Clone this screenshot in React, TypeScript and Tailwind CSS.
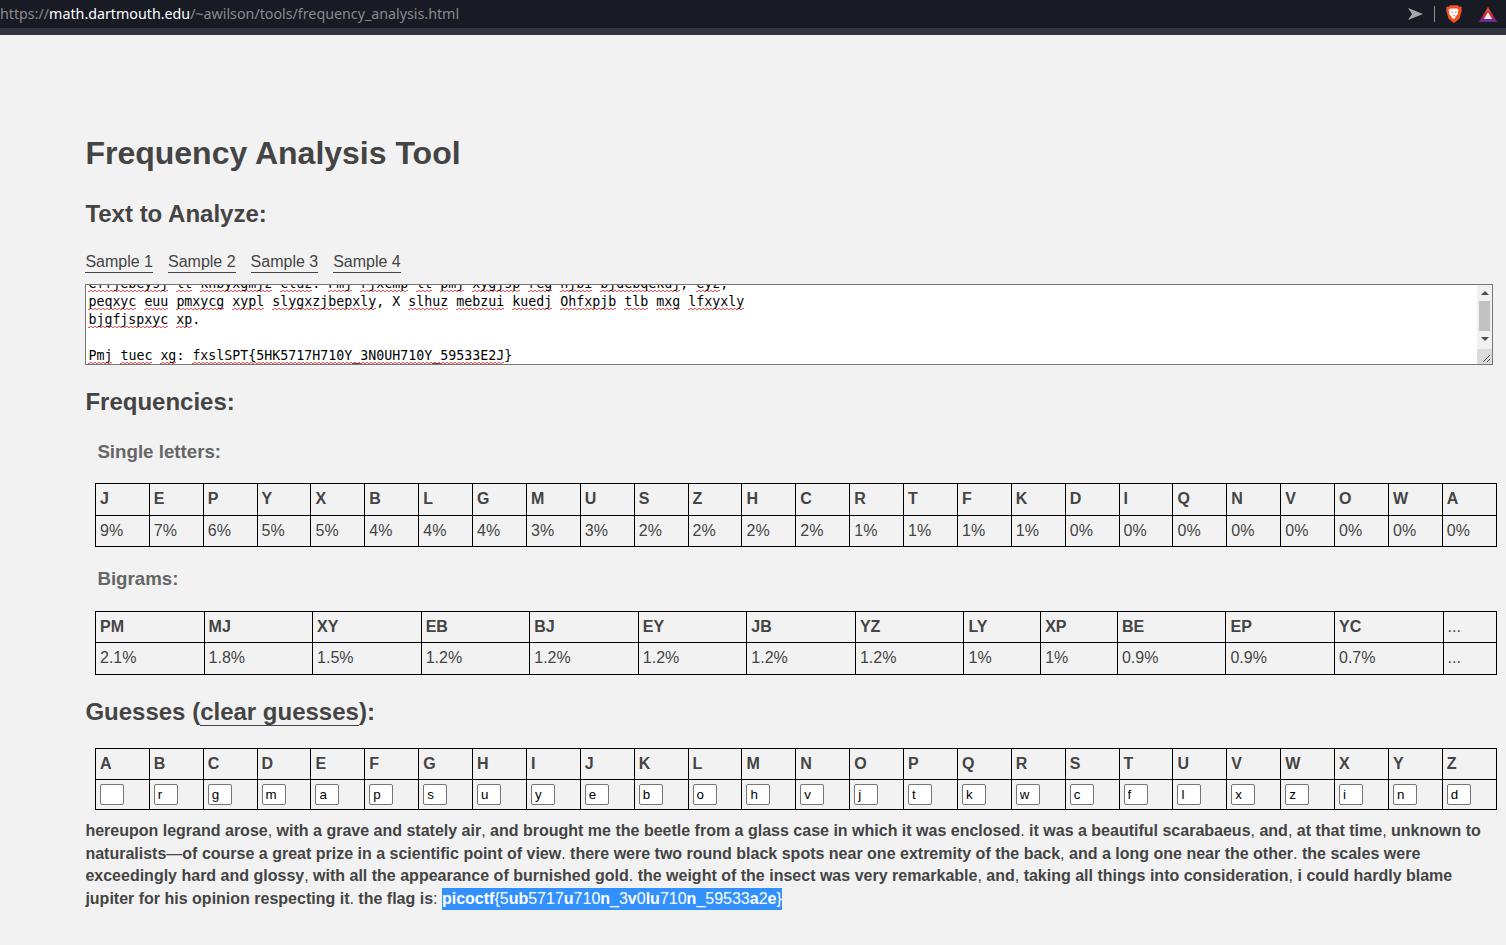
const SANS = "font-['Liberation_Sans',Arial,sans-serif]"

const singles: [string, string][] = [
  ['J', '9%'], ['E', '7%'], ['P', '6%'], ['Y', '5%'], ['X', '5%'], ['B', '4%'], ['L', '4%'], ['G', '4%'], ['M', '3%'],
  ['U', '3%'], ['S', '2%'], ['Z', '2%'], ['H', '2%'], ['C', '2%'], ['R', '1%'], ['T', '1%'], ['F', '1%'], ['K', '1%'],
  ['D', '0%'], ['I', '0%'], ['Q', '0%'], ['N', '0%'], ['V', '0%'], ['O', '0%'], ['W', '0%'], ['A', '0%'],
]

const bigrams: [string, string][] = [
  ['PM', '2.1%'], ['MJ', '1.8%'], ['XY', '1.5%'], ['EB', '1.2%'], ['BJ', '1.2%'], ['EY', '1.2%'], ['JB', '1.2%'],
  ['YZ', '1.2%'], ['LY', '1%'], ['XP', '1%'], ['BE', '0.9%'], ['EP', '0.9%'], ['YC', '0.7%'], ['...', '...'],
]

const guesses: [string, string][] = [
  ['A', ''], ['B', 'r'], ['C', 'g'], ['D', 'm'], ['E', 'a'], ['F', 'p'], ['G', 's'], ['H', 'u'], ['I', 'y'], ['J', 'e'],
  ['K', 'b'], ['L', 'o'], ['M', 'h'], ['N', 'v'], ['O', 'j'], ['P', 't'], ['Q', 'k'], ['R', 'w'], ['S', 'c'], ['T', 'f'],
  ['U', 'l'], ['V', 'x'], ['W', 'z'], ['X', 'i'], ['Y', 'n'], ['Z', 'd'],
]

const thClass = 'border border-black px-1 py-1 text-left font-bold'
const tdClass = 'border border-black px-1 py-1 text-left font-normal'

const FreqTable = ({ rows }: { rows: [string, string][] }) => (
  <table className="ml-[9.6px] w-[1402px] border-collapse">
    <tbody>
      <tr>
        {rows.map(([k], i) => (
          <th key={i} className={k === '...' ? tdClass : thClass}>{k}</th>
        ))}
      </tr>
      <tr>
        {rows.map(([k, v], i) => (
          <td key={k + i} className={tdClass}>{v}</td>
        ))}
      </tr>
    </tbody>
  </table>
)

// letters that have a guess are bold, digits and punctuation are not
const Decoded = ({ text }: { text: string }) => (
  <>
    {text.split(/([a-z]+)/).map((part, i) =>
      /^[a-z]+$/.test(part) ? <b key={i} className="font-bold">{part}</b> : <span key={i}>{part}</span>
    )}
  </>
)

// spell-check squiggle: two offset rows of 2px dashes
const Wavy = ({ children }: { children: string }) => (
  <span className="bg-no-repeat pb-px bg-[image:repeating-linear-gradient(90deg,#f05050_0_2px,transparent_2px_4px),repeating-linear-gradient(90deg,transparent_0_2px,#f05050_2px_4px)] bg-[size:100%_1px,100%_1px] bg-[position:0_100%,0_calc(100%-1px)]">
    {children}
  </span>
)

const WavyLine = ({ text }: { text: string }) => (
  <div className="h-[18px] whitespace-pre">
    {text.split(/( |, |\. |: |\.$|,$|\})/).map((part, i) =>
      /^[A-Za-z0-9_{]{2,}/.test(part) ? <Wavy key={i}>{part}</Wavy> : <span key={i}>{part}</span>
    )}
  </div>
)

const BraveIcon = () => (
  <svg width="16" height="18" viewBox="0 0 16 18">
    <path d="M4 0.3h8l1.3 1.5 1.6-.3 1 1.2-.5 1.3.4 1.4-2 7.2c-.3 1-.8 1.5-1.6 2.1L8.8 17.4c-.5.3-1.1.3-1.6 0l-3.4-2.7c-.8-.6-1.3-1.1-1.6-2.1L.2 5.4l.4-1.4L.1 2.7l1-1.2 1.6.3z" fill="#f4511e" />
    <path d="M5 3.4h6l1.6 1.5-1 2 .5 1.6-1.9 2.4-1.2.8.6 1.1L8 14l-2.6-1.2.6-1.1-1.2-.8-1.9-2.4.5-1.6-1-2z" fill="#fff" />
    <path d="M5.2 6.5l1.8.6-.7 1.2zM10.8 6.5L9 7.1l.7 1.2zM7 10.3h2L8 11.4z" fill="#f4511e" />
  </svg>
)

const RewardsIcon = () => (
  <svg width="18" height="15" viewBox="0 0 18 15">
    <defs>
      <linearGradient id="rw" x1="0" y1="0" x2="0" y2="1">
        <stop offset="0" stopColor="#ff5a1f" />
        <stop offset="0.7" stopColor="#c2185b" />
        <stop offset="1" stopColor="#9c1c6e" />
      </linearGradient>
    </defs>
    <polygon points="9,0 18,15 0,15" fill="url(#rw)" />
    <polygon points="2.6,12 15.4,12 18,15 0,15" fill="#6a2c91" />
    <polygon points="9,5.4 13,12 5,12" fill="#fff" />
  </svg>
)

export default function App() {
  return (
    <div className={`min-h-[945px] bg-[#f2f2f2] text-[16px] leading-[1.4] text-[#444] ${SANS}`}>
      {/* browser address bar */}
      <div className="flex h-[28px] items-center justify-between bg-[#181a24] pr-[9px] font-['Noto_Sans',sans-serif] text-[14.25px] text-[#8a8a8a]">
        <div>
          https://<span className="text-white">math.dartmouth.edu</span>/~awilson/tools/frequency_analysis.html
        </div>
        <div className="flex items-center">
          <svg width="15" height="12" viewBox="0 0 15 12">
            <polygon points="0,0 15,6 0,12 4,6" fill="#a8a8a8" />
          </svg>
          <div className="ml-[11px] h-[16px] w-px bg-[#8c8c8c]" />
          <div className="ml-[11px] flex"><BraveIcon /></div>
          <div className="ml-[17px] flex"><RewardsIcon /></div>
        </div>
      </div>
      <div className="h-[7px] bg-[#32343f]" />

      <main className="pl-[85.4px] pr-[12.6px] pt-[96px]">
        <h1 className="text-[32px] font-bold">Frequency Analysis Tool</h1>
        <h2 className="mt-[21px] text-[24px] font-bold">Text to Analyze:</h2>

        <div className="mt-[23px] flex gap-[15px]">
          {['Sample 1', 'Sample 2', 'Sample 3', 'Sample 4'].map((s) => (
            <a key={s} className="border-b border-[#444] leading-[18.4px]">{s}</a>
          ))}
        </div>

        {/* text area, drawn with its spell-check marks */}
        <div className="mt-[11px] flex h-[81px] border border-[#767676] bg-white">
          <div className="min-w-0 flex-1 overflow-hidden pl-[2px] font-['DejaVu_Sans_Mono',monospace] text-[13.29px] leading-[18px] text-black">
            <div className="-mt-[10px]">
              <WavyLine text="effjebeysj lt khbyxgmjz cluz. Pmj rjxcmp lt pmj xygjsp reg njbi bjdebqekuj, eyz," />
              <WavyLine text="peqxyc euu pmxycg xypl slygxzjbepxly, X slhuz mebzui kuedj Ohfxpjb tlb mxg lfxyxly" />
              <WavyLine text="bjgfjspxyc xp." />
              <div className="h-[18px]" />
              <WavyLine text="Pmj tuec xg: fxslSPT{5HK5717H710Y_3N0UH710Y_59533E2J}" />
            </div>
          </div>
          <div className="flex w-[15px] flex-col items-center bg-[#f1f1f1]">
            <div className="mt-[6px] h-0 w-0 border-x-[4px] border-b-[4px] border-x-transparent border-b-[#505050]" />
            <div className="mt-[6px] h-[30px] w-[11px] bg-[#c1c1c1]" />
            <div className="mt-[6px] h-0 w-0 border-x-[4px] border-t-[4px] border-x-transparent border-t-[#505050]" />
            <div className="mt-auto flex h-[15px] w-[15px] items-end justify-end bg-[#dcdcdc]">
              <svg width="9" height="9" viewBox="0 0 9 9" className="mb-px mr-px">
                <path d="M1 8L8 1M5 8L8 5" stroke="#555" strokeWidth="1" fill="none" />
              </svg>
            </div>
          </div>
        </div>

        <h2 className="mt-[20px] text-[24px] font-bold">Frequencies:</h2>
        <h3 className="ml-3 mt-[21px] text-[18.72px] font-bold text-[#666]">Single letters:</h3>
        <div className="mt-[17.7px]"><FreqTable rows={singles} /></div>
        <h3 className="ml-3 mt-[18.9px] text-[18.72px] font-bold text-[#666]">Bigrams:</h3>
        <div className="mt-[18.8px]"><FreqTable rows={bigrams} /></div>

        <h2 className="mt-[20px] text-[24px] font-bold">
          Guesses (<a className="border-b border-[#444]">clear guesses</a>):
        </h2>
        <table className="ml-[9.6px] mt-[19.6px] w-[1402px] border-collapse">
          <tbody>
            <tr>
              {guesses.map(([k]) => (
                <th key={k} className={thClass}>{k}</th>
              ))}
            </tr>
            <tr>
              {guesses.map(([k, v]) => (
                <td key={k} className="border border-black px-1 py-1 leading-none">
                  <input
                    readOnly
                    value={v}
                    className="block h-[21px] w-[24px] rounded-[2px] border border-[#767676] bg-white px-[3px] text-[13.33px] text-black"
                  />
                </td>
              ))}
            </tr>
          </tbody>
        </table>

        <p className="mt-[10.1px] w-[1404px] font-normal">
          <Decoded text="hereupon legrand arose, with a grave and stately air, and brought me the beetle from a glass case in which it was enclosed. it was a beautiful scarabaeus, and, at that time, unknown to naturalists—of course a great prize in a scientific point of view. there were two round black spots near one extremity of the back, and a long one near the other. the scales were exceedingly hard and glossy, with all the appearance of burnished gold. the weight of the insect was very remarkable, and, taking all things into consideration, i could hardly blame jupiter for his opinion respecting it. the flag is: " />
          <span className="inline-block bg-[#3390ff] text-white">
            <Decoded text="picoctf{5ub5717u710n_3v0lu710n_59533a2e}" />
          </span>
        </p>
      </main>
    </div>
  )
}
